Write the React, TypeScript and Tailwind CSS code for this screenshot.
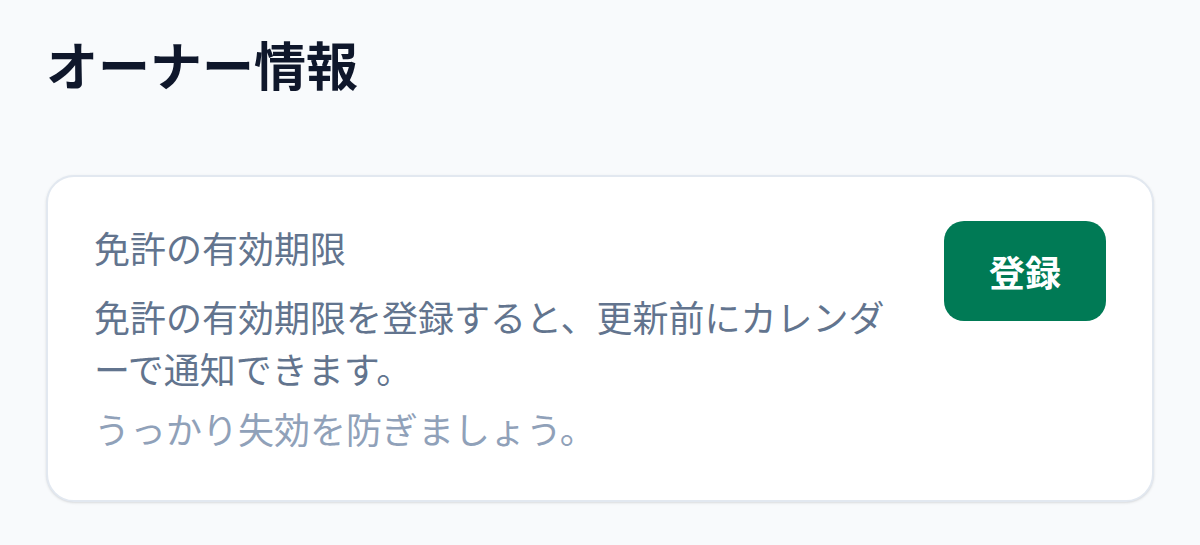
export default function App() {
  return (
    <div
      className="min-h-[545px] bg-slate-50 px-[46px] pt-[25px]"
      style={{ fontFamily: '"Noto Sans CJK JP", "Noto Sans", sans-serif' }}
    >
      <h1 className="text-[52px] font-bold leading-[78px] text-slate-900">オーナー情報</h1>

      <div className="mt-[72px] flex items-start gap-12 rounded-[28px] border-2 border-slate-200 bg-white px-[46px] pt-[43px] pb-[46px] shadow-sm">
        <div className="flex-1">
          <p className="text-[36px] leading-[54px] text-slate-500">免許の有効期限</p>
          <p className="mt-[16px] text-[36px] leading-[52px] text-slate-500">
            免許の有効期限を登録すると、更新前にカレンダーで通知できます。
          </p>
          <p className="mt-[8px] text-[36px] leading-[52px] text-slate-400">うっかり失効を防ぎましょう。</p>
        </div>
        <button className="mt-[1px] rounded-[20px] bg-emerald-700 px-[45px] py-[23px] text-[36px] font-bold leading-[54px] text-white">
          登録
        </button>
      </div>
    </div>
  );
}
